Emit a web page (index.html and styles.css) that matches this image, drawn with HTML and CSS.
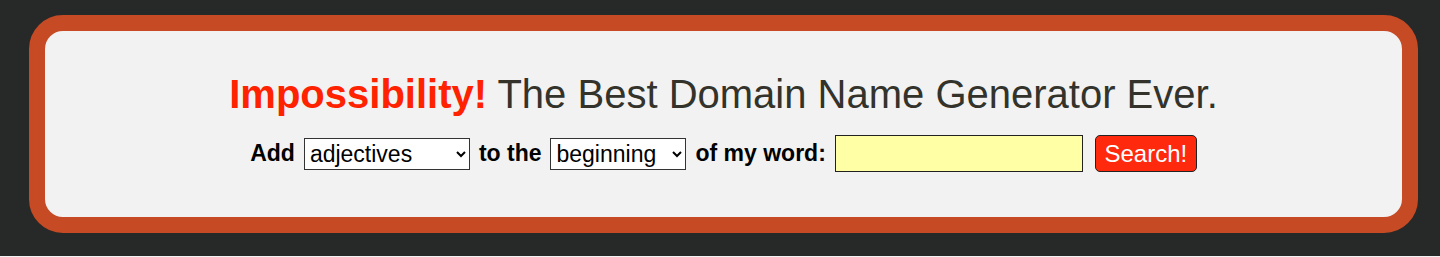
FILE: index.html
```html
<!DOCTYPE html>
<html lang="en">
<head>
    <meta charset="UTF-8">
    <meta name="viewport" content="width=device-width, initial-scale=1.0">
    <title>Impossibility! The Best Domain Name Generator Ever.</title>
    <link rel="stylesheet" href="styles.css">
</head>
<body>
    <div class="frame">
        <h1><span class="brand">Impossibility!</span> The Best Domain Name Generator Ever.</h1>

        <form class="search-row" onsubmit="return false;">
            <label for="wordType">Add</label>
            <select id="wordType" class="pick-type">
                <option>adjectives</option>
                <option>nouns</option>
                <option>verbs</option>
            </select>
            <label for="wordPlace">to the</label>
            <select id="wordPlace" class="pick-place">
                <option>beginning</option>
                <option>end</option>
            </select>
            <label for="myWord">of my word:</label>
            <input type="text" id="myWord">
            <button type="submit">Search!</button>
        </form>
    </div>
</body>
</html>
```

FILE: styles.css
```css
html {
    background-color: #f2f2f2;
}
body {
    margin: 0;
    height: 256px;
    padding: 15px 22px 0 29px;
    box-sizing: border-box;
    background-color: #272928;
    font-family: "Liberation Sans", Arial, Helvetica, sans-serif;
}
.frame {
    height: 218px;
    box-sizing: border-box;
    border: 16px solid #c64b25;
    border-radius: 34px;
    background-color: #f2f2f2;
    padding-top: 40px;
}
h1 {
    margin: 0;
    font-size: 40px;
    line-height: 46px;
    font-weight: normal;
    color: #33332c;
    text-align: center;
}
.brand {
    color: #ff2200;
    font-weight: bold;
}
.search-row {
    display: flex;
    justify-content: center;
    align-items: center;
    gap: 9px;
    margin-top: 18px;
}
label {
    font-size: 23px;
    font-weight: bold;
    color: #000;
}
select {
    height: 32px;
    font-family: "Liberation Sans", Arial, sans-serif;
    font-size: 23px;
    color: #000;
    background-color: #fff;
    border: 1px solid #333;
    border-radius: 0;
    padding: 0 1px;
}
.pick-type {
    width: 166px;
}
.pick-place {
    width: 136px;
}
input {
    width: 248px;
    height: 37px;
    box-sizing: border-box;
    background-color: #ffffa6;
    border: 1px solid #222;
    font-size: 20px;
}
button {
    margin-left: 3px;
    width: 102px;
    height: 37px;
    background-color: #ff2a0e;
    color: #fff;
    border: 1px solid #222;
    border-radius: 5px;
    font-family: "Liberation Sans", Arial, sans-serif;
    font-size: 24px;
    padding: 0;
    cursor: pointer;
}
```
